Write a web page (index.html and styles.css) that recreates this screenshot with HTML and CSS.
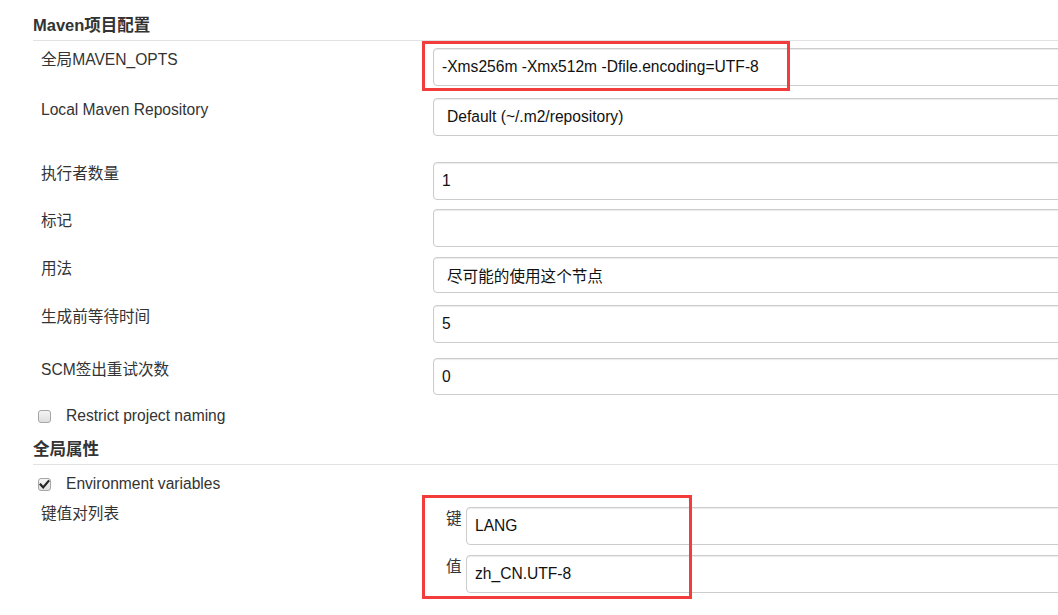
FILE: index.html
```html
<!DOCTYPE html>
<html lang="zh-CN">
<head>
<meta charset="utf-8">
<title>Maven项目配置</title>
<link rel="stylesheet" href="styles.css">
</head>
<body>
<div class="page">
  <section class="section">
    <h2 class="section-title">Maven项目配置</h2>
    <div class="row row-first">
      <div class="label">全局MAVEN_OPTS</div>
      <div class="field">
        <input class="input" type="text" value="-Xms256m -Xmx512m -Dfile.encoding=UTF-8">
        <span class="highlight highlight-opts"></span>
      </div>
    </div>
    <div class="row row-gap-13">
      <div class="label">Local Maven Repository</div>
      <div class="field">
        <div class="input select">Default (~/.m2/repository)</div>
      </div>
    </div>
    <div class="row row-gap-25">
      <div class="label">执行者数量</div>
      <div class="field"><input class="input" type="text" value="1"></div>
    </div>
    <div class="row row-gap-9">
      <div class="label">标记</div>
      <div class="field"><input class="input" type="text" value=""></div>
    </div>
    <div class="row row-gap-10">
      <div class="label">用法</div>
      <div class="field"><div class="input select select-short">尽可能的使用这个节点</div></div>
    </div>
    <div class="row row-gap-12">
      <div class="label">生成前等待时间</div>
      <div class="field"><input class="input" type="text" value="5"></div>
    </div>
    <div class="row row-gap-14">
      <div class="label">SCM签出重试次数</div>
      <div class="field"><input class="input input-short" type="text" value="0"></div>
    </div>
    <div class="check-row check-row-restrict">
      <span class="checkbox"></span>
      <span class="check-label">Restrict project naming</span>
    </div>
  </section>

  <section class="section section-global">
    <h2 class="section-title">全局属性</h2>
    <div class="check-row check-row-env">
      <span class="checkbox checked">
        <svg viewBox="0 0 13 13" width="13" height="13"><path d="M2.6 6.6 L5.2 9.4 L10.4 3.2" fill="none" stroke="#222" stroke-width="2.2" stroke-linecap="square"/></svg>
      </span>
      <span class="check-label">Environment variables</span>
    </div>
    <div class="row row-kv">
      <div class="label">键值对列表</div>
      <div class="field kv-field">
        <div class="kv-row">
          <span class="kv-label">键</span>
          <input class="input" type="text" value="LANG">
        </div>
        <div class="kv-row">
          <span class="kv-label">值</span>
          <input class="input" type="text" value="zh_CN.UTF-8">
        </div>
        <span class="highlight highlight-kv"></span>
      </div>
    </div>
  </section>
</div>
</body>
</html>
```

FILE: styles.css
```css
html, body {
  margin: 0;
  padding: 0;
  background: #fff;
  overflow: hidden;
}

body {
  font-family: "Liberation Sans", Arial, "Noto Sans CJK SC", sans-serif;
  font-size: 15.6px;
  color: #333;
}

.page {
  padding-top: 14px;
}

.section {
  margin-left: 33px;
}

.section-title {
  margin: 0;
  padding-bottom: 4px;
  font-size: 16.5px;
  line-height: 22px;
  font-weight: bold;
  color: #333;
  border-bottom: 1px solid #e2e2e2;
}

.row {
  display: grid;
  grid-template-columns: 400px 1fr;
  align-items: start;
}

.row-first { margin-top: 7px; }
.row-gap-13 { margin-top: 12px; }
.row-gap-25 { margin-top: 26px; }
.row-gap-9 { margin-top: 9px; }
.row-gap-10 { margin-top: 10px; }
.row-gap-12 { margin-top: 12px; }
.row-gap-14 { margin-top: 15px; }

.label {
  padding-left: 8px;
  padding-top: 1px;
  line-height: 22px;
  white-space: nowrap;
}

.field {
  position: relative;
}

.input {
  box-sizing: border-box;
  display: block;
  width: calc(100% + 30px);
  height: 38px;
  margin: 0;
  padding: 0 8px;
  border: 1px solid #cccccc;
  border-radius: 4px;
  box-shadow: inset 0 1px 1px rgba(0, 0, 0, 0.08);
  background: #fff;
  font-family: "Liberation Sans", Arial, "Noto Sans CJK SC", sans-serif;
  font-size: 15.6px;
  color: #111;
  outline: none;
}

.select {
  display: flex;
  align-items: center;
  padding-left: 13px;
  white-space: nowrap;
}

.select-short {
  height: 36px;
}

.input-short {
  height: 37px;
}

.highlight {
  position: absolute;
  box-sizing: border-box;
  border: 3px solid #f33c3c;
  pointer-events: none;
}

.highlight-opts {
  left: -11px;
  top: -7px;
  width: 368px;
  height: 50px;
}

.check-row {
  display: flex;
  align-items: center;
  line-height: 22px;
  padding-left: 5px;
}

.check-row-restrict {
  margin-top: 10px;
}

.checkbox {
  box-sizing: border-box;
  width: 13px;
  height: 13px;
  margin-right: 15px;
  border: 1px solid #a6a6a6;
  border-radius: 3px;
  background: linear-gradient(#f4f4f4, #dedede);
  display: flex;
}

.checkbox svg {
  margin: -1px;
  display: block;
}

.check-label {
  color: #333;
}

.section-global {
  margin-top: 11px;
}

.check-row-env {
  margin-top: 8px;
}

.row-kv {
  margin-top: 7px;
}

.kv-field {
  padding-top: 5px;
}

.kv-row {
  display: flex;
  align-items: flex-start;
  padding-left: 13px;
  margin-bottom: 10px;
}

.kv-label {
  flex: 0 0 20px;
  line-height: 22px;
  padding-top: 1px;
}

.kv-row .input {
  flex: 1 1 auto;
  width: auto;
  margin-right: -30px;
}

.highlight-kv {
  left: -11px;
  top: -7px;
  width: 270px;
  height: 104px;
}
```
